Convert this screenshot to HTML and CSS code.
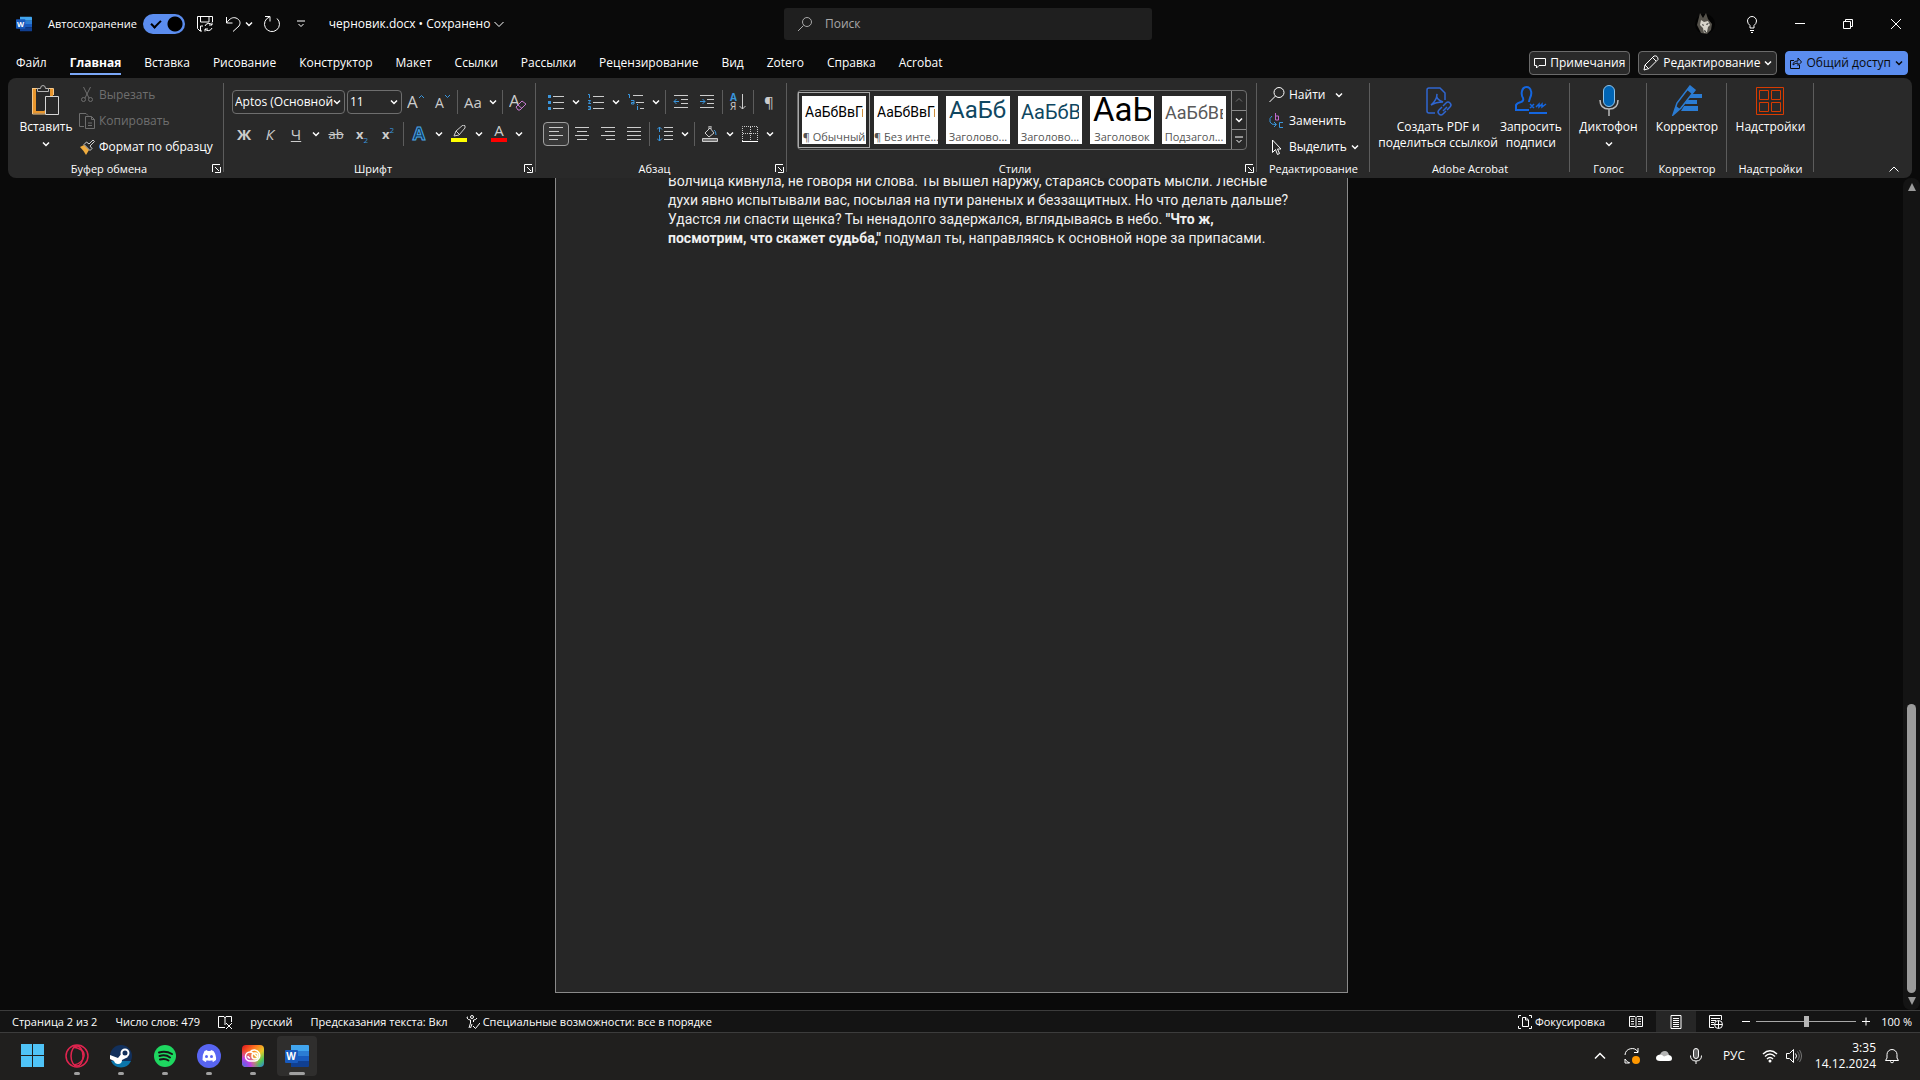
FILE: index.html
```html
<!DOCTYPE html>
<html lang="ru">
<head>
  <meta charset="UTF-8">
  <title>черновик.docx - Word</title>
  <link rel="stylesheet" href="styles.css">
</head>
<body>

<svg class="sprite" aria-hidden="true">
  <symbol id="chev" viewBox="0 0 8 8"><path d="M1 2.500 4 5.500 7 2.500" fill="none" stroke="currentColor" stroke-width="1.500"/></symbol>
  <symbol id="launch" viewBox="0 0 9 9"><path d="M.5 8V.5H8M3 3l4 4M8.500 3v5.500H3" fill="none" stroke="currentColor"/></symbol>
</svg>

<header class="titlebar">
  <div class="quick">
    <svg class="i16 word" viewBox="0 0 24 24"><path d="M6 1h17a1 1 0 0 1 1 1v5H6z" fill="#41a5ee"/><path d="M6 7h18v5H6z" fill="#2b7cd3"/><path d="M6 12h18v5H6z" fill="#185abd"/><path d="M6 17h18v5a1 1 0 0 1-1 1H6z" fill="#103f91"/><rect x="0" y="5" width="14" height="14" rx="1" fill="#185abd"/><text x="7" y="16" font-size="11" font-weight="bold" text-anchor="middle">W</text></svg>
    <label class="autosave">Автосохранение <input type="checkbox" class="toggle" checked></label>
    <button class="qbtn" aria-label="Сохранить"><svg class="i16" viewBox="0 0 16 16"><path d="M5 15H3L.5 12.500V.5h15V6M3.500.5V6H12V.5M3.500 15v-5H6M8 10a4 4 0 0 1 7-1M15 6.500V9h-3M15 12a4 4 0 0 1-7 1M8 15.500V13h3"/></svg></button>
    <button class="qbtn undo" aria-label="Отменить"><svg class="i16" viewBox="0 0 16 16"><path d="M1.500 1v6h6M1.500 7C5 2 8 1 11 2c4 1.500 5 5 3 8l-6 5.500"/></svg><svg class="i8"><use href="#chev"/></svg></button>
    <button class="qbtn" aria-label="Повторить"><svg class="i18" viewBox="0 0 18 18"><path d="M2 1.500h5v5M14 3.500A7.500 7.500 0 1 1 6.500 2"/></svg></button>
    <button class="qbtn more" aria-label="Настройка панели"><svg class="i8" viewBox="0 0 8 8"><path d="M0 1h8M1.500 4 4 6.500 6.500 4"/></svg></button>
    <button class="filename">черновик.docx • Сохранено <svg class="i10" viewBox="0 0 10 10"><path d="M.5 3 5 7.500 9.500 3"/></svg></button>
  </div>
  <label class="search">
    <svg class="i16" viewBox="0 0 16 16"><circle cx="10" cy="6" r="4.500"/><path d="M6.500 9.500 1 15"/></svg>
    <input type="text" placeholder="Поиск">
  </label>
  <div class="winbtns">
    <button aria-label="Учётная запись"><svg class="avatar" viewBox="0 0 22 22"><circle class="f" cx="12" cy="11" r="10" fill="#030303"/><path class="f" fill="#55524b" d="M7 0l3 5 3-5 2 6 4 5-1 6-4 4-6-1-4-8z"/><path class="f" fill="#d8d5cb" d="M8 7l3 2 4-1 2 4-2 2-1 5-3 1-1-5-3-3z"/><path class="f" fill="#151515" d="M9 11l2 1-1 1zM13 11l3-1-2 2zM11 17l2 1-1 2z"/></svg></button>
    <button aria-label="Советы"><svg class="i18" viewBox="0 0 18 18"><path d="M7 13v-2.500Q4.500 8.500 4.500 6a4.500 4.500 0 0 1 9 0q0 2.500-2.500 4.500V13zM7 15.500h4M8 17.500h2"/></svg></button>
    <button aria-label="Свернуть"><svg class="i10" viewBox="0 0 10 10"><path d="M0 4.500h10"/></svg></button>
    <button aria-label="Восстановить"><svg class="i10" viewBox="0 0 10 10"><path d="M.5 2.500h7v7h-7zM2.500 2V.5h7v7H8"/></svg></button>
    <button aria-label="Закрыть"><svg class="i10" viewBox="0 0 10 10"><path d="M0 0l10 10M10 0 0 10"/></svg></button>
  </div>
</header>

<nav class="tabs">
  <button>Файл</button>
  <button class="active">Главная</button>
  <button>Вставка</button>
  <button>Рисование</button>
  <button>Конструктор</button>
  <button>Макет</button>
  <button>Ссылки</button>
  <button>Рассылки</button>
  <button>Рецензирование</button>
  <button>Вид</button>
  <button>Zotero</button>
  <button>Справка</button>
  <button>Acrobat</button>
  <div class="actions">
    <button class="act"><svg class="i12" viewBox="0 0 12 12"><path d="M.5 1.500h11v7H5L2.500 11V8.500h-2z"/></svg>Примечания</button>
    <button class="act"><svg class="i16" viewBox="0 0 16 16"><path d="M1 15l1-5 9-9q2-.500 3 .5t1 3l-9 9zM10 3l3 3M2 10l4 4"/></svg>Редактирование <svg class="i8"><use href="#chev"/></svg></button>
    <button class="act share"><svg class="i12" viewBox="0 0 12 12"><path d="M4 3.500H.5v8h9V8M3 8q0-4 5-4V1l3.500 4L8 8.500V6Q5 6 3 8z"/></svg>Общий доступ <svg class="i8"><use href="#chev"/></svg></button>
  </div>
</nav>

<section class="ribbon">
  <div class="group clipboard">
    <div class="body">
      <button class="big paste">
        <svg viewBox="0 0 28 31"><path d="M2.500 4v23H14M19.500 4v7" stroke="#e8962e" stroke-width="3"/><path d="M.5 3.500H7M15 3.500h6.500V10M.5 3v26H13" stroke="#f6c98a"/><path class="f" d="M4 6h14v5h-6v15H4z" fill="#292929"/><path d="M5.500 6.500v-3h3q0-3 2.500-3t2.500 3h3v3z" stroke="#b5b5b5" fill="#292929"/><path d="M13.500 11.500h13v18h-13z" stroke="#d6d6d6" fill="#292929"/></svg>
        Вставить
        <svg class="i8"><use href="#chev"/></svg>
      </button>
      <div class="stack">
        <button class="off"><svg class="i16" viewBox="0 0 16 16"><path d="M4.500 0 10 11M11.500 0 6 11"/><circle cx="4.500" cy="12.500" r="2"/><circle cx="11.500" cy="12.500" r="2"/></svg>Вырезать</button>
        <button class="off"><svg class="i16" viewBox="0 0 16 16"><path d="M5 13.500H.5V.5H7L9 2.500M6.500 3.500h6l3 3v9h-9zM12.500 3.500v3h3M9 10h4M9 12.500h4"/></svg>Копировать</button>
        <button><svg class="i16" viewBox="0 0 16 16"><path class="f" d="M1 8l4-2 5 5-3 5Q5 12 1 8z" fill="#f0ac3e"/><path d="M5 5.500 7.500 3 10 5l4-4 1.500 1.500L11 7l2 2.500-2 2z" stroke="#d0d0d0"/></svg>Формат по образцу</button>
      </div>
    </div>
    <div class="foot"><span>Буфер обмена</span><button aria-label="Параметры"><svg class="i9"><use href="#launch"/></svg></button></div>
  </div>

  <div class="group font">
    <div class="body rows">
      <div class="row">
        <label class="combo family"><select aria-label="Шрифт"><option>Aptos (Основной</option></select><svg class="i8"><use href="#chev"/></svg></label>
        <label class="combo size"><select aria-label="Размер"><option>11</option></select><svg class="i8"><use href="#chev"/></svg></label>
        <button class="tool" aria-label="Увеличить"><svg class="i18" viewBox="0 0 18 18"><text x="0" y="15" font-size="17">A</text><path class="b" d="M12 5l2.500-2.500L17 5"/></svg></button>
        <button class="tool" aria-label="Уменьшить"><svg class="i18" viewBox="0 0 18 18"><text x="2" y="15" font-size="14">A</text><path class="b" d="M12 2l2.500 2.500L17 2"/></svg></button>
        <i class="sep"></i>
        <button class="tool glyph">Aa</button><button class="drop"><svg class="i8"><use href="#chev"/></svg></button>
        <i class="sep"></i>
        <button class="tool" aria-label="Очистить"><svg class="i18" viewBox="0 0 18 18"><text x="0" y="14" font-size="17">A</text><path stroke="#c77bd0" fill="#292929" d="M7 14l6-6 4 3-6 6H9zM9 12l4 3.500"/></svg></button>
      </div>
      <div class="row">
        <button class="tool glyph"><b>Ж</b></button>
        <button class="tool glyph"><em>К</em></button>
        <button class="tool glyph"><u>Ч</u></button><button class="drop"><svg class="i8"><use href="#chev"/></svg></button>
        <button class="tool glyph small"><s>ab</s></button>
        <button class="tool glyph small"><b>x</b><sub>2</sub></button>
        <button class="tool glyph small"><b>x</b><sup>2</sup></button>
        <i class="sep"></i>
        <button class="tool" aria-label="Эффекты"><svg class="i18" viewBox="0 0 18 18"><text x="9" y="15" font-size="18" font-weight="bold" text-anchor="middle" class="fx">A</text></svg></button><button class="drop"><svg class="i8"><use href="#chev"/></svg></button>
        <button class="tool" aria-label="Цвет выделения"><svg class="i18" viewBox="0 0 18 18"><path class="f" d="M1 13h16v4H1z" fill="#ff0"/><path d="M4 11l2-5 7-6q3 0 2 3l-6 7zM6 6l4 4"/></svg></button><button class="drop"><svg class="i8"><use href="#chev"/></svg></button>
        <button class="tool" aria-label="Цвет текста"><svg class="i18" viewBox="0 0 18 18"><path class="f" d="M1 13h16v4H1z" fill="#f00"/><text x="9" y="11" font-size="15" text-anchor="middle">A</text></svg></button><button class="drop"><svg class="i8"><use href="#chev"/></svg></button>
      </div>
    </div>
    <div class="foot"><span>Шрифт</span><button aria-label="Параметры"><svg class="i9"><use href="#launch"/></svg></button></div>
  </div>

  <div class="group para">
    <div class="body rows">
      <div class="row">
        <button class="tool" aria-label="Маркеры"><svg class="i16" viewBox="0 0 16 16"><path d="M5 2.500h11M5 8.500h11M5 14.500h11"/><path class="f" fill="#3a96dd" d="M0 1h3v3H0zM0 7h3v3H0zM0 13h3v3H0z"/></svg></button><button class="drop"><svg class="i8"><use href="#chev"/></svg></button>
        <button class="tool" aria-label="Нумерация"><svg class="i16" viewBox="0 0 16 16"><path d="M5 2.500h11M5 8.500h11M5 14.500h11"/><path class="b" d="M0 .5h1.500V4M0 6.500h2.500L.5 9.500H3M0 12.500h2.500v3H0M.5 14h2"/></svg></button><button class="drop"><svg class="i8"><use href="#chev"/></svg></button>
        <button class="tool" aria-label="Многоуровневый список"><svg class="i16" viewBox="0 0 16 16"><path d="M5 1.500h10M8 8.500h8M12 14.500h4"/><path class="b" d="M0 .5h1.500V4M3 6.500h3v3.500H3.500V8.500H6M9.500 10v1M9.500 12v4"/></svg></button><button class="drop"><svg class="i8"><use href="#chev"/></svg></button>
        <i class="sep"></i>
        <button class="tool" aria-label="Уменьшить отступ"><svg class="i16" viewBox="0 0 16 16"><path d="M1 1.500h14M8 5.500h7M8 9.500h7M1 13.500h14"/><path class="b" d="M6 7.500H1M3.500 5 1 7.500 3.500 10"/></svg></button>
        <button class="tool" aria-label="Увеличить отступ"><svg class="i16" viewBox="0 0 16 16"><path d="M1 1.500h14M8 5.500h7M8 9.500h7M1 13.500h14"/><path class="b" d="M1 7.500h5M3.500 5 6 7.500 3.500 10"/></svg></button>
        <i class="sep"></i>
        <button class="tool" aria-label="Сортировка"><svg class="i18" viewBox="0 0 18 18"><text x="1" y="8" font-size="10" font-weight="bold" class="bt">A</text><text x="1" y="17" font-size="10">Я</text><path d="M13.500 1v15M10.500 13l3 3 3-3"/></svg></button>
        <i class="sep"></i>
        <button class="tool glyph">¶</button>
      </div>
      <div class="row">
        <button class="tool on" aria-label="По левому краю"><svg class="i16" viewBox="0 0 16 16"><path d="M1 1.500h14M1 5.500h10M1 9.500h14M1 13.500h9"/></svg></button>
        <button class="tool" aria-label="По центру"><svg class="i16" viewBox="0 0 16 16"><path d="M1 1.500h14M3 5.500h10M1 9.500h14M3 13.500h10"/></svg></button>
        <button class="tool" aria-label="По правому краю"><svg class="i16" viewBox="0 0 16 16"><path d="M1 1.500h14M5 5.500h10M1 9.500h14M6 13.500h9"/></svg></button>
        <button class="tool" aria-label="По ширине"><svg class="i16" viewBox="0 0 16 16"><path d="M1 1.500h14M1 5.500h14M1 9.500h14M1 13.500h14"/></svg></button>
        <i class="sep"></i>
        <button class="tool" aria-label="Интервал"><svg class="i16" viewBox="0 0 16 16"><path d="M7 1.500h9M7 5.500h9M7 9.500h9M7 13.500h9"/><path class="b" d="M2.500 1v5M2.500 9v6M0 3.500 2.500 1 5 3.500M0 12.500 2.500 15 5 12.500"/></svg></button><button class="drop"><svg class="i8"><use href="#chev"/></svg></button>
        <i class="sep"></i>
        <button class="tool" aria-label="Заливка"><svg class="i16" viewBox="0 0 16 16"><path d="M.5 12.500h15v3H.5z" fill="#777"/><path d="M3 7l5-5 4 5-5 4zM7 3V0h2v3"/><path class="b" d="M12 4q2 1 2 5"/></svg></button><button class="drop"><svg class="i8"><use href="#chev"/></svg></button>
        <button class="tool" aria-label="Границы"><svg class="i16" viewBox="0 0 16 16"><path stroke-dasharray="1 1" d="M.5 15V.5h15V15M8.500 1v14M1 7.500h14"/><path d="M0 15.500h16" stroke="#fff"/></svg></button><button class="drop"><svg class="i8"><use href="#chev"/></svg></button>
      </div>
    </div>
    <div class="foot"><span>Абзац</span><button aria-label="Параметры"><svg class="i9"><use href="#launch"/></svg></button></div>
  </div>

  <div class="group styles">
    <div class="body">
      <div class="gallery">
        <button class="style on"><span class="card"><span class="demo">АаБбВвГг</span><span class="name">¶ Обычный</span></span></button>
        <button class="style"><span class="card"><span class="demo">АаБбВвГг</span><span class="name">¶ Без инте...</span></span></button>
        <button class="style"><span class="card"><span class="demo h1">АаБб</span><span class="name">Заголово...</span></span></button>
        <button class="style"><span class="card"><span class="demo h2">АаБбВв</span><span class="name">Заголово...</span></span></button>
        <button class="style"><span class="card"><span class="demo title">АаЬ</span><span class="name">Заголовок</span></span></button>
        <button class="style"><span class="card"><span class="demo sub">АаБбВв</span><span class="name">Подзагол...</span></span></button>
        <div class="scroller">
          <button class="off" aria-label="Вверх"><svg class="i8" viewBox="0 0 8 8"><path d="M1 5.500 4 2.500 7 5.500"/></svg></button>
          <button aria-label="Вниз"><svg class="i8"><use href="#chev"/></svg></button>
          <button aria-label="Ещё"><svg class="i8" viewBox="0 0 8 8"><path d="M0 1h8M1.500 4 4 6.500 6.500 4"/></svg></button>
        </div>
      </div>
    </div>
    <div class="foot"><span>Стили</span><button aria-label="Параметры"><svg class="i9"><use href="#launch"/></svg></button></div>
  </div>

  <div class="group editing">
    <div class="body">
      <div class="stack">
        <button><svg class="i16" viewBox="0 0 16 16"><circle cx="10" cy="5.500" r="5"/><path d="M6.500 9 .5 15"/></svg>Найти <svg class="i8 gap"><use href="#chev"/></svg></button>
        <button><svg class="i16" viewBox="0 0 16 16"><path stroke="#c36bd0" d="M6.500 0v7h3V3h-3"/><path class="b" d="M3 3Q0 5 1 9q1 3 6 2.500M5 9l2.500 2.500L5 14M14 9.500h-3.500v5H14"/></svg>Заменить</button>
        <button><svg class="i16" viewBox="0 0 16 16"><path d="M3.500 1v12.500l3-3 2 5 2-1-2-4.500H12z"/></svg>Выделить <svg class="i8"><use href="#chev"/></svg></button>
      </div>
    </div>
    <div class="foot"><span>Редактирование</span></div>
  </div>

  <div class="group acrobat">
    <div class="body">
      <button class="big"><svg class="w" viewBox="0 0 28 31"><g stroke="#2f66d0" stroke-width="1.500"><path d="M11 28H5q-2 0-2-2V5q0-2 2-2h11l5 5v7M7 20q6-5 6-11-2 5 6 8-7 0-12 3z"/><path d="M19 21l3-3q2-2 4 0t0 4l-3 3M23 22l-4 4M22 26l-3 3q-2 2-4 0t0-4l3-3"/></g></svg>Создать PDF и<br>поделиться ссылкой</button>
      <button class="big"><svg class="w" viewBox="0 0 32 31"><g stroke="#1466e0" stroke-width="2"><path d="M14 25H1v-5q1-2 5-3 3-1 2-4-2-3-1-7 1-4 4.500-4T16 6q1 3-1 7-1 3-1 4"/><path d="M15 19l4 4M19 19l-4 4M21 22l3-3v3l3-3v3l4-3" stroke-width="1.500"/><path d="M14 28h18"/></g></svg>Запросить<br>подписи</button>
    </div>
    <div class="foot"><span>Adobe Acrobat</span></div>
  </div>

  <div class="group voice">
    <div class="body">
      <button class="big paste"><svg viewBox="0 0 28 31"><rect x="8.500" y=".5" width="11" height="21" rx="5.500" fill="#0064b4" stroke="#8fc4ea"/><path d="M5 15q0 9 9 9t9-9M14 24v7" stroke="#bbb" stroke-width="1.500"/></svg>Диктофон<svg class="i8"><use href="#chev"/></svg></button>
    </div>
    <div class="foot"><span>Голос</span></div>
  </div>

  <div class="group editor">
    <div class="body">
      <button class="big"><svg class="w" viewBox="0 0 32 31"><g fill="#2b7cd3" stroke="none"><path class="f" d="M19 9h12v4H17zM16 15h10v4H14zM13 21h14v5H10z"/></g><path d="M2 30 6 18 19 1l5 4-14 18z" stroke="#2b7cd3" stroke-width="1.500" fill="#292929"/><path class="f" d="M16 5l3-4 5 4-3 4zM2 30l3-9 4 3z" fill="#2b7cd3"/></svg>Корректор</button>
    </div>
    <div class="foot"><span>Корректор</span></div>
  </div>

  <div class="group addins">
    <div class="body">
      <button class="big"><svg viewBox="0 0 28 31"><path stroke="#d83b01" d="M.5 2.500h27v27H.5zM3.500 5.500h9v9h-9zM15.500 5.500h9v9h-9zM3.500 17.500h9v9h-9zM15.500 17.500h9v9h-9z"/></svg>Надстройки</button>
    </div>
    <div class="foot"><span>Надстройки</span></div>
  </div>

  <button class="collapse" aria-label="Свернуть ленту"><svg class="i10" viewBox="0 0 10 10"><path d="M.5 7.500 5 3l4.500 4.500"/></svg></button>
</section>

<main class="workspace">
  <div class="canvas">
    <article class="page">
      <p>Волчица кивнула, не говоря ни слова. Ты вышел наружу, стараясь собрать мысли. Лесные<br>
      духи явно испытывали вас, посылая на пути раненых и беззащитных. Но что делать дальше?<br>
      Удастся ли спасти щенка? Ты ненадолго задержался, вглядываясь в небо. <b>"Что ж,<br>
      посмотрим, что скажет судьба,"</b> подумал ты, направляясь к основной норе за припасами.</p>
    </article>
  </div>
  <div class="scrollbar">
    <svg class="i10" viewBox="0 0 10 10"><path class="f" d="M5 1l4 8H1z" fill="#9b9b9b"/></svg>
    <div class="thumb"></div>
    <svg class="i10" viewBox="0 0 10 10"><path class="f" d="M5 9l4-8H1z" fill="#9b9b9b"/></svg>
  </div>
</main>

<footer class="status">
  <button>Страница 2 из 2</button>
  <button>Число слов: 479</button>
  <button aria-label="Правописание"><svg class="i14" viewBox="0 0 14 14"><path d="M7 12.500H.5V1.500H6L7 3l1-1.500h5.500V7M7 3v7M8 8l6 6M14 8l-6 6"/></svg></button>
  <button>русский</button>
  <button>Предсказания текста: Вкл</button>
  <button class="tight"><svg class="i14" viewBox="0 0 14 14"><circle cx="6" cy="2" r="1.500"/><path d="M1 3q1 2 3.500 2v3L3 13M11 3q-1 2-3.500 2v2M1 3q-.500-1 1-1M6 9l-1.500 4M7 11l2.500 2.500L14 8"/></svg>Специальные возможности: все в порядке</button>
  <div class="views">
    <button class="tight focus"><svg class="i14" viewBox="0 0 14 14"><path d="M3 .5H.5V3M11 .5h2.500V3M3 13.500H.5V11M11 13.500h2.500V11M4.500 2.500H8L10.500 5v6.500h-6zM7.500 2.500V5H10"/></svg>Фокусировка</button>
    <button class="view" aria-label="Чтение"><svg class="i14" viewBox="0 0 14 14"><path d="M.5 1.500H6L7 2.500l1-1h5.500v10H8l-1 1-1-1H.5zM7 2.500v10M2 4h3M2 6.500h3M2 9h3M9 4h3M9 6.500h3M9 9h3"/></svg></button>
    <button class="view on" aria-label="Разметка"><svg class="i14" viewBox="0 0 14 14"><path d="M2 .5h10v13H2zM4 3.500h6M4 5.500h6M4 7.500h6M4 9.500h6M4 11.500h6"/></svg></button>
    <button class="view" aria-label="Веб-документ"><svg class="i14" viewBox="0 0 14 14"><path d="M5 12.500H.5V.5h12V5M2 3.500h9M2 5.500h5M2 7.500h3M2 9.500h3"/><circle cx="9.500" cy="9.500" r="4"/><path d="M5.500 9.500h8M9.500 5.500v8"/></svg></button>
    <button class="zoom" aria-label="Уменьшить"><svg class="i10" viewBox="0 0 10 10"><path d="M1 4.500h8"/></svg></button>
    <input type="range" aria-label="Масштаб" min="0" max="100" value="50">
    <button class="zoom" aria-label="Увеличить"><svg class="i10" viewBox="0 0 10 10"><path d="M1 4.500h8M5 .5v8"/></svg></button>
    <button class="percent">100 %</button>
  </div>
</footer>

<div class="taskbar">
  <button class="app" aria-label="Пуск"><svg viewBox="0 0 24 24"><path class="f" fill="#4fc3f7" d="M0 0h11v11H0zM12 0h11v11H12zM0 12h11v11H0zM12 12h11v11H12z"/></svg></button>
  <button class="app run" aria-label="Opera GX"><svg viewBox="0 0 24 24"><g stroke="#e0244f" stroke-width="1.500"><circle cx="12" cy="12" r="11"/><ellipse cx="12" cy="12" rx="6" ry="10"/><path d="M8 3q12 2 11 9T9 21"/></g></svg></button>
  <button class="app run" aria-label="Steam"><svg viewBox="0 0 24 24"><circle class="f" cx="12" cy="12" r="11" fill="#12305c"/><path class="f" fill="#0b76ab" d="M2 17a11 11 0 0 0 20 0z"/><path class="f" fill="#fff" d="M1 11l8 3 4-5 6 4-6 3q0 4-4 4-3 0-4-3l-4-2z"/><circle cx="16" cy="9" r="3.500" fill="#12305c" stroke="#fff" stroke-width="2"/></svg></button>
  <button class="app run" aria-label="Spotify"><svg viewBox="0 0 24 24"><circle class="f" cx="12" cy="12" r="11" fill="#1ed760"/><path stroke="#161616" stroke-width="2" stroke-linecap="round" d="M6 8.500q7-2 13 1.500M6.500 12q6-2 10.500 1.500M7 15.500q5-1.500 8.500 1"/></svg></button>
  <button class="app run" aria-label="Discord"><svg viewBox="0 0 24 24"><circle class="f" cx="12" cy="12" r="12" fill="#5865f2"/><path class="f" fill="#fff" d="M7.500 7 10 6l.5 1h3l.5-1 2.500 1q3 4 2.500 9l-3 2-1-1.500q1 0 1.500-.500-4 1.500-8 0 .5.500 1.500.5L8.500 18l-3-2q-.500-5 2-9z"/><circle class="f" cx="9.500" cy="12.500" r="1.500" fill="#5865f2"/><circle class="f" cx="14.500" cy="12.500" r="1.500" fill="#5865f2"/></svg></button>
  <button class="app run" aria-label="Creative Cloud"><svg viewBox="0 0 24 24"><defs><linearGradient id="cc" x1="0" y1="0" x2="1" y2="1"><stop offset="0" stop-color="#e01020"/><stop offset=".35" stop-color="#ff7a20"/><stop offset=".6" stop-color="#e8c92a"/><stop offset=".8" stop-color="#4fc35a"/><stop offset="1" stop-color="#2f7de8"/></linearGradient><radialGradient id="cc2" cx="0" cy="1" r=".8"><stop offset="0" stop-color="#3f6df0"/><stop offset=".5" stop-color="#c040e0"/><stop offset="1" stop-color="#e040a0" stop-opacity="0"/></radialGradient></defs><rect class="f" x="1" y="1" width="22" height="22" rx="4" fill="url(#cc)"/><rect class="f" x="1" y="1" width="22" height="22" rx="4" fill="url(#cc2)"/><path stroke="#fff" stroke-width="1.500" d="M14 17H9a4.500 4.500 0 0 1 0-9q2 0 4 2l3 3M9 14q-2 0-2-2M9 8a5.500 5.500 0 1 1 5 9"/><circle cx="14" cy="12" r="3" stroke="#fff" stroke-width="1.500"/></svg></button>
  <button class="app run current" aria-label="Word"><svg class="word" viewBox="0 0 24 24"><path d="M6 1h17a1 1 0 0 1 1 1v5H6z" fill="#41a5ee"/><path d="M6 7h18v5H6z" fill="#2b7cd3"/><path d="M6 12h18v5H6z" fill="#185abd"/><path d="M6 17h18v5a1 1 0 0 1-1 1H6z" fill="#103f91"/><rect x="0" y="6" width="13" height="13" rx="1" fill="#185abd"/><text x="6" y="16" font-size="10" font-weight="bold" text-anchor="middle">W</text></svg></button>
  <div class="tray">
    <button class="t" aria-label="Скрытые значки"><svg class="i12" viewBox="0 0 12 12"><path stroke-width="1.500" d="M1 8.500l5-5 5 5"/></svg></button>
    <button class="t" aria-label="Обновление"><svg class="i16" viewBox="0 0 16 16"><path d="M1 7a7 7 0 0 1 13-3M14 0v4.500h-4M5 15H1v-4M1 11q2 3.500 5 4"/><circle class="f" cx="12" cy="12" r="4" fill="#ff9800"/></svg></button>
    <button class="t" aria-label="OneDrive"><svg class="i16" viewBox="0 0 16 16"><path class="f" fill="#b5b5b5" d="M4 7q1-4 5-4 3 0 4 4l-4 4z"/><path class="f" fill="#fff" d="M4 13q-4 0-4-3t4-3.500q2 0 4 2l4-1.500q4 0 4 3.500 0 2.500-3 2.500z"/></svg></button>
    <button class="t" aria-label="Микрофон"><svg class="i16" viewBox="0 0 16 16"><rect x="5.500" y=".5" width="5" height="10" rx="2.500" fill="#666"/><path d="M2.500 7.500q0 5.500 5.500 5.500t5.500-5.500M8 13v3"/></svg></button>
    <button class="t lang">РУС</button>
    <button class="t net" aria-label="Сеть и звук">
      <svg class="i16" viewBox="0 0 16 16"><path stroke-width="1.500" d="M1 6q7-6.500 14 0M3 8.500q5-5 10 0M5 11q3-3 6 0"/><circle class="f" cx="8" cy="13" r="1.500" fill="#fff"/></svg>
      <svg class="i16" viewBox="0 0 16 16"><path d="M.5 5.500h3l4-4v13l-4-4h-3zM9.500 5.500q2 2.500 0 5"/><path stroke="#777" d="M11.500 3.500q3.500 4.500 0 9M13.500 2q4 6 0 12"/></svg>
    </button>
    <button class="t clock">3:35<br>14.12.2024</button>
    <button class="t" aria-label="Уведомления"><svg class="i16" viewBox="0 0 16 16"><path d="M1.500 12.500 3 10V6.500a5 5 0 0 1 10 0V10l1.500 2.500zM6 13.500q2 3 4 0"/></svg></button>
  </div>
</div>

</body>
</html>
```
FILE: styles.css
```css
* {
  box-sizing: border-box;
}
body {
  margin: 0;
  height: 100vh;
  display: flex;
  flex-direction: column;
  overflow: hidden;
  background: #0a0a0a;
  color: #fff;
  font-family: "Open Sans", "Noto Sans", sans-serif;
  font-size: 12px;
  line-height: 16px;
}
button {
  padding: 0;
  border: none;
  background: none;
  color: inherit;
  font: inherit;
  white-space: nowrap;
}
svg {
  flex: none;
  display: block;
  fill: none;
  stroke: currentColor;
}
svg text {
  fill: #ccc;
  stroke: none;
}
svg .f { stroke: none; }
svg .b { stroke: #3a96dd; }
svg .bt { fill: #3a96dd; }
svg .fx { fill: #0d3a5e; stroke: #4ba3e3; }
.word { stroke: none; }
.word text { fill: #fff; }
.sprite { display: none; }
.i8 { width: 8px; height: 8px; }
.i9 { width: 9px; height: 9px; }
.i10 { width: 10px; height: 10px; }
.i12 { width: 12px; height: 12px; }
.i14 { width: 14px; height: 14px; }
.i16 { width: 16px; height: 16px; }
.i18 { width: 18px; height: 18px; }

/* title bar */
.titlebar {
  display: flex;
  align-items: center;
  height: 48px;
  padding-left: 16px;
}
.quick {
  flex: 1;
  display: flex;
  align-items: center;
}
.autosave {
  display: flex;
  align-items: center;
  gap: 6px;
  margin: 0 12px 0 16px;
  font-size: 11px;
}
.toggle {
  appearance: none;
  width: 42px;
  height: 20px;
  margin: 0;
  border-radius: 10px;
  background:
    radial-gradient(circle at 32px 10px, #000 7px, transparent 8px),
    #5b8def;
  position: relative;
}
.toggle::after {
  content: "";
  position: absolute;
  left: 10px;
  top: 4px;
  width: 4px;
  height: 8px;
  border: solid #000;
  border-width: 0 2px 2px 0;
  transform: rotate(45deg);
}
.qbtn {
  display: flex;
  align-items: center;
  gap: 4px;
  margin-right: 12px;
}
.qbtn.undo { margin-right: 10px; }
.qbtn.more { margin: 0 24px 0 4px; }
.filename {
  display: flex;
  align-items: center;
  gap: 4px;
}
.search {
  display: flex;
  align-items: center;
  gap: 12px;
  width: 368px;
  height: 32px;
  padding: 0 13px;
  border-radius: 3px;
  background: #1f1f1f;
  color: #a8a8a8;
}
.search input {
  flex: 1;
  min-width: 0;
  padding: 0;
  border: none;
  outline: none;
  background: none;
  color: #fff;
  font: inherit;
}
.search input::placeholder { color: #a8a8a8; }
.winbtns {
  flex: 1;
  display: flex;
  justify-content: flex-end;
}
.winbtns button {
  width: 48px;
  height: 48px;
  display: flex;
  align-items: center;
  justify-content: center;
}
.avatar { width: 22px; height: 22px; }

/* tabs */
.tabs {
  display: flex;
  align-items: center;
  gap: 23px;
  height: 30px;
  padding: 0 12px 0 16px;
}
.tabs > button {
  height: 24px;
  padding-top: 2px;
  border-bottom: 2px solid transparent;
}
.tabs > .active {
  font-weight: bold;
  border-color: #7aa7f7;
}
.actions {
  margin-left: auto;
  display: flex;
  gap: 8px;
}
.act {
  display: flex;
  align-items: center;
  gap: 4px;
  height: 24px;
  padding: 0 4px;
  border: 1px solid #6b6b6b;
  border-radius: 4px;
  background: #292929;
}
.act.share {
  background: #5b8def;
  border-color: #5b8def;
  color: #0a0a0a;
}

/* ribbon */
.ribbon {
  position: relative;
  z-index: 1;
  display: flex;
  height: 100px;
  margin: 0 8px;
  padding: 4px 0 2px;
  border-radius: 8px;
  background: #292929;
}
.group {
  display: flex;
  flex-direction: column;
  flex: none;
  background: linear-gradient(#5c5c5c, #5c5c5c) right 1px / 1px 89px no-repeat;
}
.clipboard { width: 216px; }
.font { width: 312px; }
.para { width: 251px; }
.styles { width: 470px; }
.editing { width: 113px; }
.acrobat { width: 200px; }
.voice { width: 77px; }
.editor { width: 80px; }
.addins { width: 87px; }
.body {
  flex: 1;
  display: flex;
  justify-content: center;
}
.clipboard .body { justify-content: flex-start; padding-left: 11px; }
.foot {
  display: flex;
  align-items: center;
  height: 15px;
  padding: 0 3px;
  font-size: 11px;
}
.foot span { flex: 1; text-align: center; }
.foot button { margin-left: 5px; }
.big {
  display: flex;
  flex-direction: column;
  align-items: center;
  padding-top: 3px;
  line-height: 16px;
}
.big > svg:first-child {
  width: 28px;
  height: 31px;
  margin-bottom: 3px;
}
.big > svg.w { width: 32px; }
.paste { width: 54px; }
.paste .i8 { margin-top: 5px; }
.acrobat .body { gap: 2px; }
.stack {
  display: flex;
  flex-direction: column;
}
.clipboard .stack { margin-left: 6px; }
.stack button {
  display: flex;
  align-items: center;
  gap: 4px;
  height: 26px;
}
.stack .off { color: #6f6f6f; }
.stack .gap { margin-left: 6px; }
.editing .body { justify-content: flex-start; padding-left: 12px; }
.rows {
  flex-direction: column;
  justify-content: flex-start;
  gap: 8px;
  padding: 8px 0 0 7px;
}
.row {
  display: flex;
  align-items: center;
  height: 24px;
}
.combo {
  display: flex;
  align-items: center;
  height: 24px;
  margin: 0 1px;
  padding: 0 3px 0 2px;
  border: 1px solid #6e6e6e;
  border-radius: 4px;
}
.family { width: 113px; }
.size { width: 55px; }
.combo select {
  appearance: none;
  flex: 1;
  min-width: 0;
  padding: 0;
  border: none;
  background: none;
  color: #fff;
  font: inherit;
}
.tool {
  width: 26px;
  height: 24px;
  display: flex;
  align-items: center;
  justify-content: center;
  color: #ccc;
}
.tool.on {
  border: 1px solid #a0a0a0;
  border-radius: 4px;
  background: #383838;
}
.drop {
  width: 14px;
  display: flex;
  justify-content: center;
}
.glyph { font-size: 15px; }
.glyph.small { font-size: 13px; }
.glyph sub, .glyph sup {
  color: #3a96dd;
  font-size: 8px;
  line-height: 8px;
}
.glyph sub { margin-top: 12px; }
.glyph sup { margin-bottom: 8px; }
.sep {
  width: 1px;
  height: 24px;
  margin: 0 2px;
  background: #5c5c5c;
}

/* style gallery */
.gallery {
  display: flex;
  width: 450px;
  height: 60px;
  margin-top: 8px;
  border: 1px solid #6e6e6e;
  border-radius: 4px;
}
.style {
  width: 72px;
  height: 56px;
  margin-top: 1px;
  padding: 2px;
  border: 2px solid transparent;
}
.style.on { border: 1px solid #a8a8a8; padding: 3px; }
.card {
  display: flex;
  flex-direction: column;
  justify-content: space-between;
  height: 48px;
  overflow: hidden;
  background: #fff;
  text-align: center;
}
.demo {
  height: 33px;
  margin-left: 3px;
  margin-right: 3px;
  overflow: hidden;
  color: #000;
  font: 14px/33px Roboto, sans-serif;
  text-align: left;
}
.demo.h1 { color: #0f4761; font-size: 24px; line-height: 29px; }
.demo.h2 { color: #0f4761; font-size: 20px; }
.demo.title { font-size: 33px; line-height: 27px; }
.demo.sub { color: #595959; font-size: 18px; }
.name { color: #555; font-size: 11px; line-height: 15px; }
.scroller {
  display: flex;
  flex-direction: column;
  width: 15px;
  margin-left: auto;
  border-left: 1px solid #8a8a8a;
}
.scroller button {
  flex: 1;
  display: flex;
  align-items: center;
  justify-content: center;
}
.scroller button + button { border-top: 1px solid #8a8a8a; }
.scroller .off { color: #6f6f6f; }
.collapse {
  margin: 0 13px 2px auto;
  align-self: flex-end;
}

/* document */
.workspace {
  flex: 1;
  min-height: 0;
  display: flex;
}
.canvas {
  flex: 1;
  display: flex;
  align-items: flex-end;
  justify-content: center;
  padding-bottom: 17px;
  overflow: hidden;
}
.page {
  flex: none;
  width: 793px;
  height: 1122px;
  padding: 300px 0 0 112px;
  border: 1px solid #8a8a8a;
  background: #262626;
  color: #f0f0f0;
  font: 14px/19px Roboto, sans-serif;
}
.page p {
  margin: 0;
  white-space: nowrap;
}
.scrollbar {
  width: 17px;
  display: flex;
  flex-direction: column;
  align-items: center;
  padding: 4px 0;
  border-radius: 8px;
  background: #141414;
}
.thumb {
  width: 9px;
  height: 289px;
  margin: auto 0 3px;
  border-radius: 5px;
  background: #9b9b9b;
}

/* status bar */
.status {
  display: flex;
  align-items: center;
  gap: 18px;
  height: 23px;
  padding: 0 8px 0 12px;
  border-top: 1px solid #3c3c3c;
  border-bottom: 1px solid #3c3c3c;
  background: #141414;
  font-size: 11px;
}
.tight {
  display: flex;
  align-items: center;
  gap: 3px;
}
.views {
  margin-left: auto;
  display: flex;
  align-items: center;
}
.focus { margin-right: 11px; }
.view {
  width: 40px;
  height: 21px;
  display: flex;
  align-items: center;
  justify-content: center;
}
.view.on { background: #262626; }
.zoom {
  width: 14px;
  display: flex;
  justify-content: center;
}
.view + .zoom { margin-left: 3px; }
.status input {
  appearance: none;
  width: 100px;
  height: 11px;
  margin: 0 3px;
  background: linear-gradient(#a8a8a8, #a8a8a8) center / 100% 1px no-repeat;
}
.status input::-webkit-slider-thumb {
  appearance: none;
  width: 5px;
  height: 11px;
  background: #b5b5b5;
}
.percent { margin-left: 8px; }

/* taskbar */
.taskbar {
  display: flex;
  align-items: center;
  gap: 4px;
  height: 47px;
  padding: 0 12px 2px 13px;
  background: #201f1e;
}
.app {
  position: relative;
  width: 40px;
  height: 40px;
  border-radius: 4px;
}
.app svg {
  width: 24px;
  height: 24px;
  margin: auto;
}
.app.current { background: #2f2e2d; }
.app.run::after {
  content: "";
  position: absolute;
  left: 17px;
  bottom: 1px;
  width: 6px;
  height: 3px;
  border-radius: 2px;
  background: #a0a0a0;
}
.app.current::after { left: 12px; width: 16px; }
.tray {
  margin-left: auto;
  display: flex;
  align-items: center;
}
.t {
  width: 32px;
  display: flex;
  align-items: center;
  justify-content: center;
}
.lang { width: 44px; }
.net { width: 52px; gap: 8px; }
.clock {
  display: block;
  width: 68px;
  text-align: right;
}
```
